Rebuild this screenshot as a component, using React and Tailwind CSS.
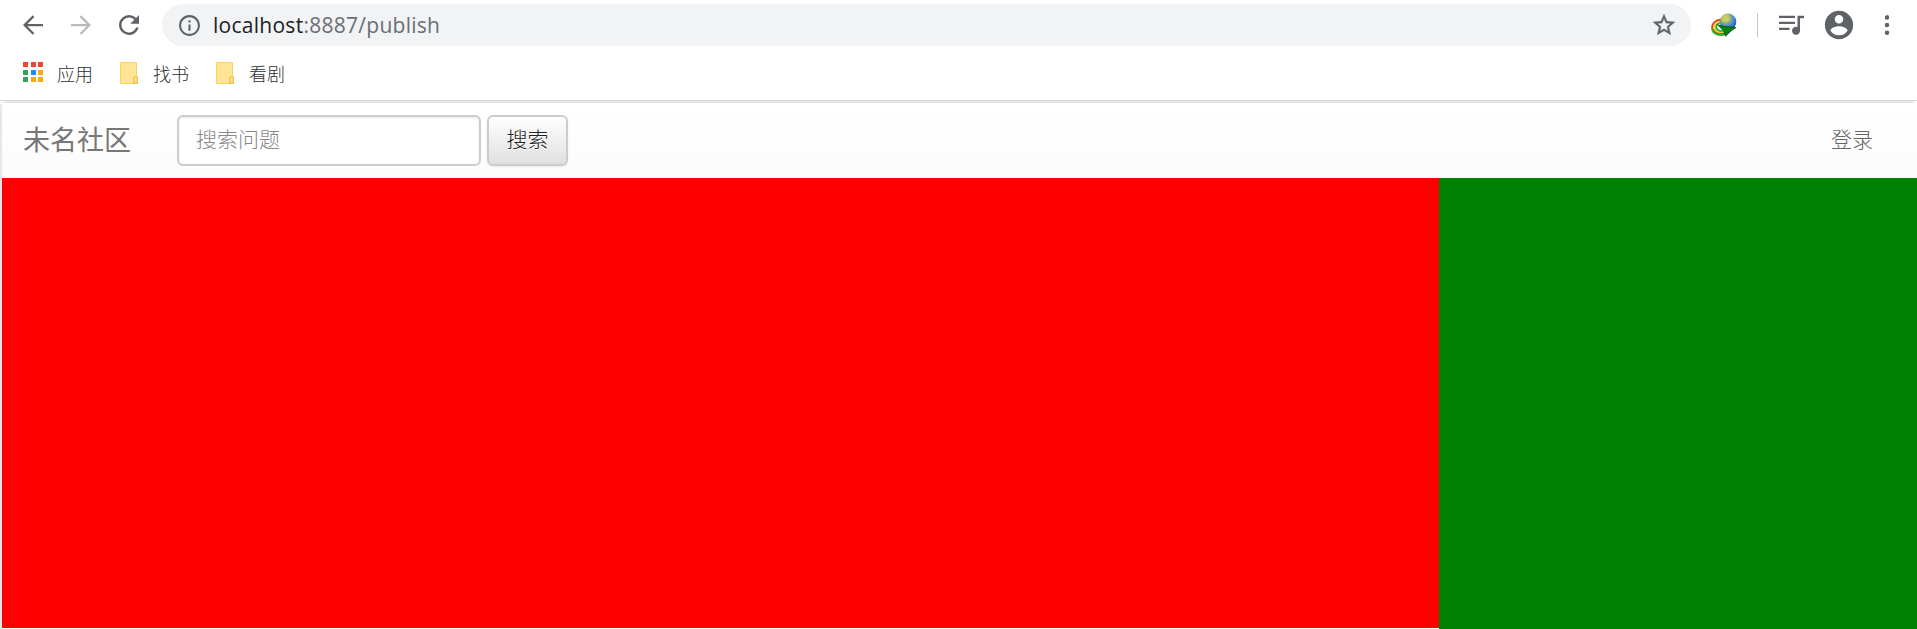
const MaterialIcon = ({ d, className }) => (
  <svg viewBox="0 0 24 24" fill="currentColor" className={className}>
    <path d={d} />
  </svg>
);

const appDots = [
  'bg-[#f44336]', 'bg-[#f44336]', 'bg-[#f44336]',
  'bg-[#34a35a]', 'bg-[#1a8cff]', 'bg-[#fbab0c]',
  'bg-[#34a35a]', 'bg-[#fbab0c]', 'bg-[#fbab0c]',
];

const Folder = () => (
  <svg viewBox="0 0 18 22" className="h-[22px] w-[18px]">
    <path d="M.5 .5h16v14.500l1 1v5.500H.5z" fill="#ffe594" stroke="#f7d55b" />
    <path d="M14 21v-5.200q0-1.300 1.600-1.300 1.700 0 1.700 1.300V21z" fill="#ffe594" stroke="#e9bd3b" strokeWidth="1.2" />
  </svg>
);

const Globe = () => (
  <svg viewBox="0 0 26 24" className="h-6 w-[26px]">
    <defs>
      <radialGradient id="globe" cx=".38" cy=".3" r=".75">
        <stop offset="0" stopColor="#e4e8c8" />
        <stop offset=".4" stopColor="#8fae63" />
        <stop offset=".6" stopColor="#4b8ee0" />
        <stop offset="1" stopColor="#1746a0" />
      </radialGradient>
    </defs>
    <g fill="none" strokeWidth="2">
      <path d="M10 6.500C4 7.500 .5 11 1.300 15c1.300 4.500 7 6.500 12.700 5" stroke="#e8342a" />
      <path d="M10 8.200C5.500 9 2.600 12 3.200 15c1 3.300 5 4.800 10 3.600" stroke="#ffd21e" />
      <path d="M10 10c-3.300.8-5.200 2.800-4.700 4.900.8 2.200 3.800 3.200 7.400 2.500" stroke="#1fb82a" />
      <path d="M10 11.500c-2 .5-3.200 1.700-2.900 2.900.6 1.300 2.600 2 5 1.700" stroke="#fff" />
    </g>
    <path d="M1 15.500c1 5.500 7 8 13 5.700" fill="none" stroke="#22b51f" strokeWidth="1.800" />
    <circle cx="17" cy="8.800" r="8.300" fill="url(#globe)" />
    <path d="M12 2.800c2-1.700 5-1.900 6-1 .5 1.700-1.200 2.500-1.500 4.500-.5 2-2.500 3.500-4.500 3-2-1-2-4.500 0-6.500z" fill="#c5c957" opacity=".8" />
    <path d="M6.500 11.800l8 1.700 10.500 1-5 3.500-5.500 5.200-1.500-5z" fill="#048412" stroke="#034d09" strokeWidth=".8" />
  </svg>
);

const Bookmark = ({ label }) => (
  <div className="flex items-center">
    <Folder />
    <span className="ml-[15px] w-9 pb-px text-[18px] leading-6">{label}</span>
  </div>
);

function BrowserBar() {
  return (
    <header className="h-[101px] border-b border-[#d7d7d7] bg-white text-[#5f6368]">
      <div className="flex h-[50px] items-start pt-1">
        <div className="flex h-[41px] w-[162px] shrink-0 items-center pl-[18px]">
          <MaterialIcon className="h-[30px] w-[30px]" d="M20 11.100H7.500l5.600-5.600L11.800 4.200 4 12l7.800 7.800 1.300-1.300-5.600-5.600H20z" />
          <MaterialIcon className="ml-[18px] h-[30px] w-[30px] text-[#bababa]" d="M4 11.100h12.500l-5.600-5.600 1.300-1.300L20 12l-7.800 7.800-1.300-1.300 5.600-5.600H4z" />
          <MaterialIcon className="ml-[18px] h-[30px] w-[30px]" d="M17.650 6.350A7.958 7.958 0 0 0 12 4a8 8 0 1 0 7.730 10h-2.080A6 6 0 1 1 12 6c1.660 0 3.140.69 4.220 1.780L13 11h7V4z" />
        </div>
        <div className="flex h-[42px] w-[1529px] shrink-0 items-center rounded-full bg-[#f1f3f4] pr-[14px] pl-[15px]">
          <MaterialIcon className="h-[25px] w-[25px]" d="M11 7h2v2h-2zm0 4h2v6h-2zm1-9C6.480 2 2 6.480 2 12s4.480 10 10 10 10-4.480 10-10S17.520 2 12 2zm0 18c-4.410 0-8-3.590-8-8s3.590-8 8-8 8 3.590 8 8-3.590 8-8 8z" />
          <span className="ml-[11px] flex-1 pb-px font-['Open_Sans',sans-serif] text-[21px] font-normal leading-[30px] tracking-[0.27px] text-[#6b6f73]">
            <span className="text-[#202124]">localhost</span>:8887/publish
          </span>
          <MaterialIcon className="h-[26px] w-[26px] stroke-current stroke-[0.4]" d="M22 9.240l-7.190-.62L12 2 9.190 8.630 2 9.240l5.460 4.730L5.820 21 12 17.270 18.180 21l-1.630-7.030zM12 15.400l-3.760 2.270 1-4.280-3.320-2.880 4.380-.38L12 6.100l1.710 4.040 4.380.38-3.320 2.880 1 4.280z" />
        </div>
        <div className="flex h-[41px] flex-1 items-center pl-5">
          <Globe />
          <div className="ml-5 h-6 w-px bg-[#c6c8ca]" />
          <svg viewBox="0 0 25 20" fill="currentColor" className="ml-[21px] h-5 w-[25px]">
            <path d="M0 .8h16V3H0zM0 6.800h16V9H0zM0 12.800h10.500V15H0zM18.500.8H25v2.500h-4v12a4 4 0 1 1-2.500-3.300z" />
          </svg>
          <MaterialIcon className="ml-[18px] h-[34px] w-[34px]" d="M12 2C6.480 2 2 6.480 2 12s4.480 10 10 10 10-4.480 10-10S17.520 2 12 2zm0 3c1.660 0 3 1.340 3 3s-1.340 3-3 3-3-1.340-3-3 1.340-3 3-3zm0 14.200a7.200 7.200 0 0 1-6-3.220c.03-1.990 4-3.080 6-3.080 1.990 0 5.970 1.090 6 3.080a7.200 7.200 0 0 1-6 3.220z" />
          <MaterialIcon className="ml-4 h-[30px] w-[30px]" d="M12 7.700a1.800 1.800 0 1 0 0-3.600 1.800 1.800 0 0 0 0 3.600zm0 2.500a1.800 1.800 0 1 0 0 3.600 1.800 1.800 0 0 0 0-3.600zm0 6.100a1.800 1.800 0 1 0 0 3.600 1.800 1.800 0 0 0 0-3.600z" />
        </div>
      </div>
      <div className="flex h-[46px] items-center pl-[23px] text-[#2c3033]">
        <div className="mb-0.5 grid w-5 grid-cols-3 gap-[2.5px]">
          {appDots.map((color, i) => (
            <span key={i} className={`h-[5px] w-[5px] ${color}`} />
          ))}
        </div>
        <span className="mr-[27px] ml-[14px] w-9 pb-px text-[18px] leading-6">应用</span>
        <Bookmark label="找书" />
        <div className="w-[27px]" />
        <Bookmark label="看剧" />
      </div>
    </header>
  );
}

function Navbar() {
  return (
    <nav className="flex h-[75px] items-start bg-gradient-to-b from-white to-[#fcfcfc] pt-3 text-[#666]">
      <a className="ml-[21px] w-[154px] text-[27px] font-normal leading-[48px] text-[#777]">未名社区</a>
      <input
        placeholder="搜索问题"
        className="h-[51px] w-[304px] rounded-md border-2 border-[#ccc] bg-white px-[17px] pb-1.5 text-[21px] shadow-[inset_0_1px_2px_rgba(0,0,0,0.09)] placeholder:text-[#888]"
      />
      <button className="ml-1.5 h-[51px] w-[81px] rounded-md border-2 border-[#ccc] bg-gradient-to-b from-white to-[#e0e0e0] pb-1 text-[21px] text-[#222] shadow-[0_1px_2px_rgba(0,0,0,0.08)] [text-shadow:0_1px_0_#fff]">
        搜索
      </button>
      <a className="mr-11 ml-auto text-[21px] leading-[47px]">登录</a>
    </nav>
  );
}

export default function App() {
  return (
    <div className="flex h-[629px] w-[1917px] flex-col overflow-hidden bg-white font-['Noto_Sans_CJK_SC',sans-serif] font-light">
      <BrowserBar />
      <div className="flex flex-1 flex-col rounded-t-md border-t-2 border-l-2 border-[#e7e7e7]">
        <Navbar />
        <main className="flex h-[451px] items-start">
          <section className="h-[450px] w-[1437px] bg-[#f00]" />
          <aside className="h-full flex-1 bg-[#008000]" />
        </main>
      </div>
    </div>
  );
}
